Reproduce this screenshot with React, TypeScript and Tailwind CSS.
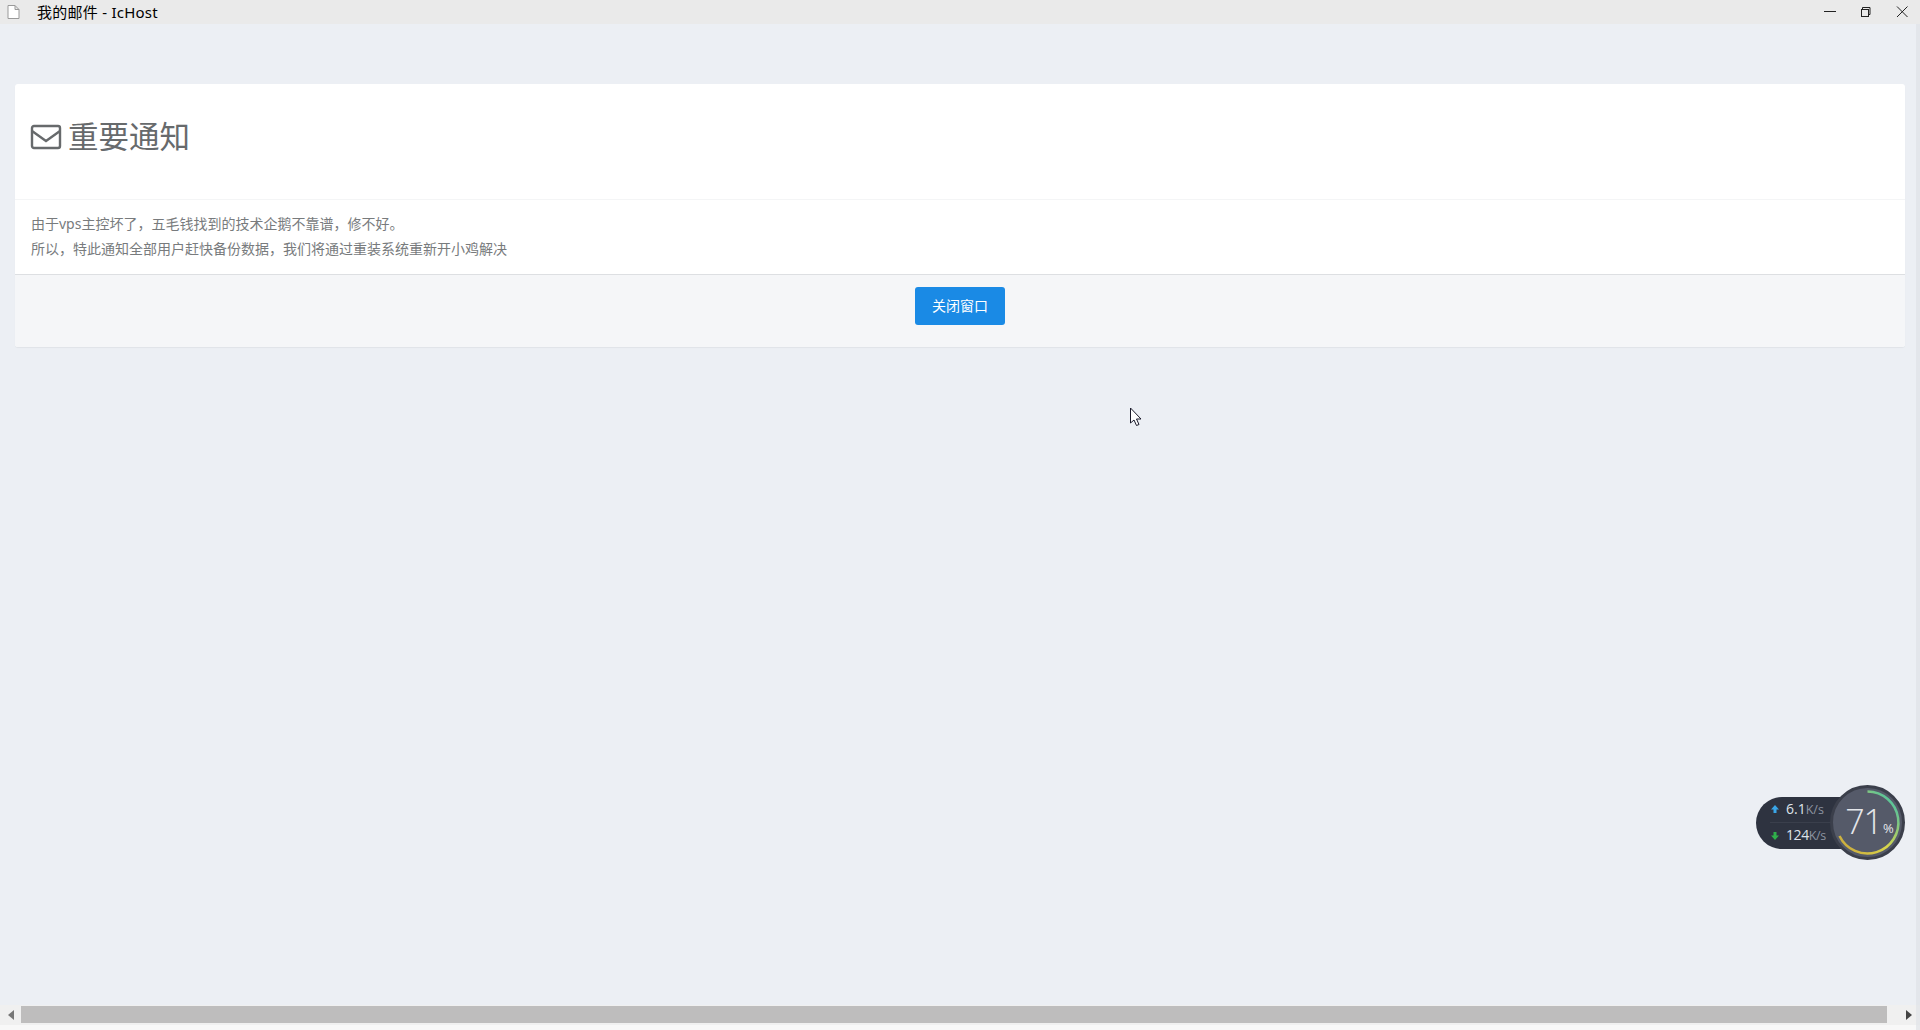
import React from "react";

const cjk = "font-['Noto_Sans','Noto_Sans_CJK_SC',sans-serif]";

function WindowButtons() {
  return (
    <div className="flex items-center gap-[22px] pr-[3px] text-[#222]">
      <svg width="14" height="14" viewBox="0 0 14 14" fill="none" stroke="currentColor">
        <path d="M1 6.5h12" />
      </svg>
      <svg width="14" height="14" viewBox="0 0 14 14" fill="none" stroke="currentColor">
        <path d="M3.5 4.5v-2h7.5v7h-2" />
        <rect x="2.5" y="4.5" width="7" height="7" />
      </svg>
      <svg width="14" height="14" viewBox="0 0 14 14" fill="none" stroke="currentColor">
        <path d="M2 1.5l10.5 10.5M12.5 1.5L2 12" />
      </svg>
    </div>
  );
}

function SpeedWidget() {
  return (
    <div className="absolute right-[15px] top-[761px] flex items-center">
      <div className="w-[90px] h-[52px] rounded-l-[26px] bg-[#2e3340] -mr-[16px] pl-[14px] flex flex-col justify-center font-['Open_Sans',sans-serif]">
        <div className="h-[26px] flex items-center gap-[6px] border-b border-[#3a3f4c]">
          <svg width="10" height="10" viewBox="0 0 10 10" fill="#3aa6e8">
            <path d="M5 1l4 4.5H6.5V9h-3V5.5H1z" />
          </svg>
          <span className="text-[14px] leading-none text-[#dfe3ea]">
            6.1<span className="text-[12.5px] text-[#8d93a0]">K/s</span>
          </span>
        </div>
        <div className="h-[26px] flex items-center gap-[6px]">
          <svg width="10" height="10" viewBox="0 0 10 10" fill="#2fb04a">
            <path d="M5 9L1 4.5h2.5V1h3v3.5H9z" />
          </svg>
          <span className="text-[14px] leading-none tracking-[-0.4px] text-[#dfe3ea]">
            124<span className="text-[12.5px] text-[#8d93a0]">K/s</span>
          </span>
        </div>
      </div>
      <div className="relative w-[75px] h-[75px] rounded-full bg-[#555a69] border-[3px] border-[#3b3f4b] flex items-center justify-center pb-[3px] font-['Open_Sans',sans-serif]">
        <svg className="absolute inset-0" width="69" height="69" viewBox="0 0 69 69" fill="none" strokeWidth="2.5">
          <defs>
            <linearGradient id="ring" x1="0" y1="1" x2="1" y2="0">
              <stop offset="0" stopColor="#c9a33a" />
              <stop offset="0.45" stopColor="#d9d64a" />
              <stop offset="0.8" stopColor="#6cc48e" />
              <stop offset="1" stopColor="#35c4b0" />
            </linearGradient>
          </defs>
          <path d="M34.5 3.5A31 31 0 1 1 6.5 48" stroke="url(#ring)" />
        </svg>
        <span className="text-[34px] leading-none font-light text-[#e4e6ea] tracking-[-1px] ml-[4px]">71</span>
        <span className="text-[13px] leading-none text-[#e4e6ea] mt-[15px] ml-[1px]">%</span>
      </div>
    </div>
  );
}

export default function App() {
  return (
    <div className={`relative h-screen w-screen overflow-hidden flex flex-col bg-[#f8f8f8] ${cjk}`}>
      <header className="h-6 shrink-0 bg-[#eaeaea] flex items-center justify-between pl-[7px] pr-[8px]">
        <div className="flex items-center">
          <svg width="13" height="14" viewBox="0 0 13 14" fill="#fff" stroke="#9a9a9a">
            <path d="M1 .5h7l4 4v9H1zM8 .5v4h4" />
          </svg>
          <span className="ml-[17px] text-[15px] text-black leading-none tracking-[0.25px]">我的邮件 - IcHost</span>
        </div>
        <WindowButtons />
      </header>

      <main className="relative flex-1 bg-[#eceff4] pt-[60px] px-[15px]">
        <section className="bg-white rounded-[3px] shadow-[0_1px_1px_rgba(0,0,0,0.05)]">
          <div className="h-[116px] pl-[15px] pb-[10px] flex items-center gap-[6px] border-b border-[#f4f5f6]">
            <svg width="32" height="26" viewBox="0 0 32 26" fill="none" stroke="#676a6c" strokeWidth="2.4">
              <rect x="2" y="2" width="28" height="22" rx="2" />
              <path d="M2 7l14 10L30 7" />
            </svg>
            <h1 className="text-[30.5px] leading-none font-normal text-[#676a6c]">重要通知</h1>
          </div>
          <div className="h-[74px] pl-[16px] pr-[15px] pt-[12px] text-[14px] leading-[24.5px] text-[#787b7d]">
            <p>由于vps主控坏了，五毛钱找到的技术企鹅不靠谱，修不好。</p>
            <p>所以，特此通知全部用户赶快备份数据，我们将通过重装系统重新开小鸡解决</p>
          </div>
          <div className="h-[73px] bg-[#f5f6f8] border-t border-[#dddfe2] rounded-b-[3px] flex justify-center pt-[12px]">
            <button className="w-[90px] h-[38px] rounded-[3px] bg-[#1a8ae5] text-white text-[14px] pb-[2px]">关闭窗口</button>
          </div>
        </section>

        <svg className="absolute left-[1129px] top-[383px]" width="14" height="20" viewBox="0 0 14 20" fill="#fff" stroke="#1a1a2a">
          <path d="M1.5 1v15l3.5-3 2.5 5.5 2.5-1-2.5-5.5h4.5z" />
        </svg>

        <SpeedWidget />
      </main>

      <div className="h-5 shrink-0 bg-[#f0f0f0] flex items-center pb-[1px]">
        <div className="w-[21px] flex justify-center">
          <svg width="6" height="10" viewBox="0 0 6 10" fill="#777">
            <path d="M6 0v10L0 5z" />
          </svg>
        </div>
        <div className="w-[1866px] h-[17px] bg-[#bebdbd]" />
        <div className="flex-1 flex justify-center pl-[10px]">
          <svg width="6" height="10" viewBox="0 0 6 10" fill="#444">
            <path d="M0 0v10l6-5z" />
          </svg>
        </div>
      </div>
      <div className="h-[5px] shrink-0" />

      {/* edge of the window behind */}
      <div className="absolute right-0 top-6 bottom-0 w-[4px] bg-[#dfe2e7]/70" />
    </div>
  );
}
